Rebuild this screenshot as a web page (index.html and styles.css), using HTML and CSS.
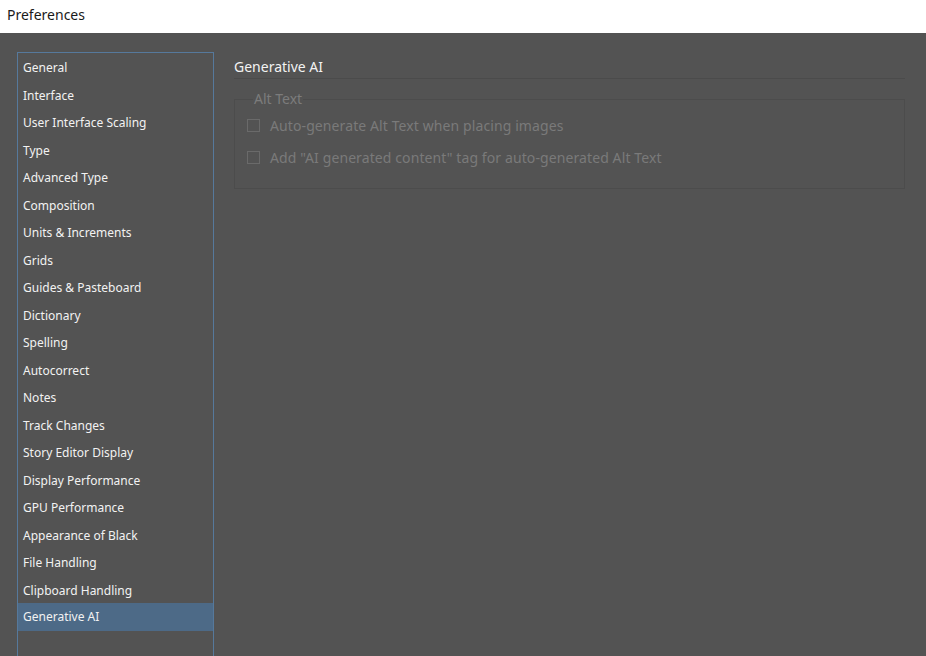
FILE: index.html
```html
<!DOCTYPE html>
<html>
<head>
<meta charset="utf-8">
<link rel="stylesheet" href="styles.css">
</head>
<body>
<div class="titlebar">Preferences</div>
<div class="main">
  <ul class="nav">
    <li>General</li>
    <li>Interface</li>
    <li>User Interface Scaling</li>
    <li>Type</li>
    <li>Advanced Type</li>
    <li>Composition</li>
    <li>Units &amp; Increments</li>
    <li>Grids</li>
    <li>Guides &amp; Pasteboard</li>
    <li>Dictionary</li>
    <li>Spelling</li>
    <li>Autocorrect</li>
    <li>Notes</li>
    <li>Track Changes</li>
    <li>Story Editor Display</li>
    <li>Display Performance</li>
    <li>GPU Performance</li>
    <li>Appearance of Black</li>
    <li>File Handling</li>
    <li>Clipboard Handling</li>
    <li class="selected">Generative AI</li>
  </ul>
  <div class="content">
    <div class="section-title">Generative AI</div>
    <fieldset class="group">
      <legend>Alt Text</legend>
      <label class="check"><span class="box"></span>Auto-generate Alt Text when placing images</label>
      <label class="check"><span class="box"></span>Add "AI generated content" tag for auto-generated Alt Text</label>
    </fieldset>
  </div>
</div>
</body>
</html>
```
FILE: styles.css
```css
html, body {
  margin: 0;
  padding: 0;
  height: 100%;
  overflow: hidden;
}
body {
  background: #535353;
  font-family: "Noto Sans", "Open Sans", sans-serif;
}
.titlebar {
  height: 33px;
  background: #ffffff;
  color: #1a1a1a;
  font-size: 14px;
  line-height: 30px;
  padding-left: 7px;
  box-sizing: border-box;
}
.main {
  display: flex;
  padding: 19px 0 0 17px;
  height: calc(100% - 33px);
  box-sizing: border-box;
}
.nav {
  list-style: none;
  margin: 0;
  padding: 0;
  width: 197px;
  box-sizing: border-box;
  border: 1px solid #56799c;
  border-bottom: none;
  flex: none;
}
.nav li {
  height: 27.5px;
  line-height: 29px;
  padding-left: 5px;
  font-size: 12px;
  color: #f2f2f2;
  white-space: nowrap;
}
.nav li.selected {
  background: #4d6a87;
  height: 28px;
  line-height: 28px;
}
.content {
  flex: 1;
  margin-left: 20px;
  margin-right: 21px;
}
.section-title {
  font-size: 14px;
  color: #f2f2f2;
  line-height: 20px;
  padding-top: 5px;
  padding-bottom: 0;
  border-bottom: 1px solid #4b4b4b;
  height: 21px;
}
.group {
  margin: 12px 0 0 0;
  padding: 3px 0 15px 12px;
  border: 1px solid #4c4c4c;
  min-inline-size: 0;
}
.group legend {
  font-size: 14px;
  color: #7c7c7c;
  padding: 0 1px;
  margin-left: 6px;
  line-height: 16px;
}
.check {
  display: flex;
  align-items: center;
  height: 31.5px;
  font-size: 14px;
  letter-spacing: 0.1px;
  color: #7a7a7a;
  white-space: nowrap;
}
.box {
  width: 13px;
  height: 13px;
  box-sizing: border-box;
  border: 1px solid #6a6a6a;
  margin-right: 10px;
  flex: none;
}
```
